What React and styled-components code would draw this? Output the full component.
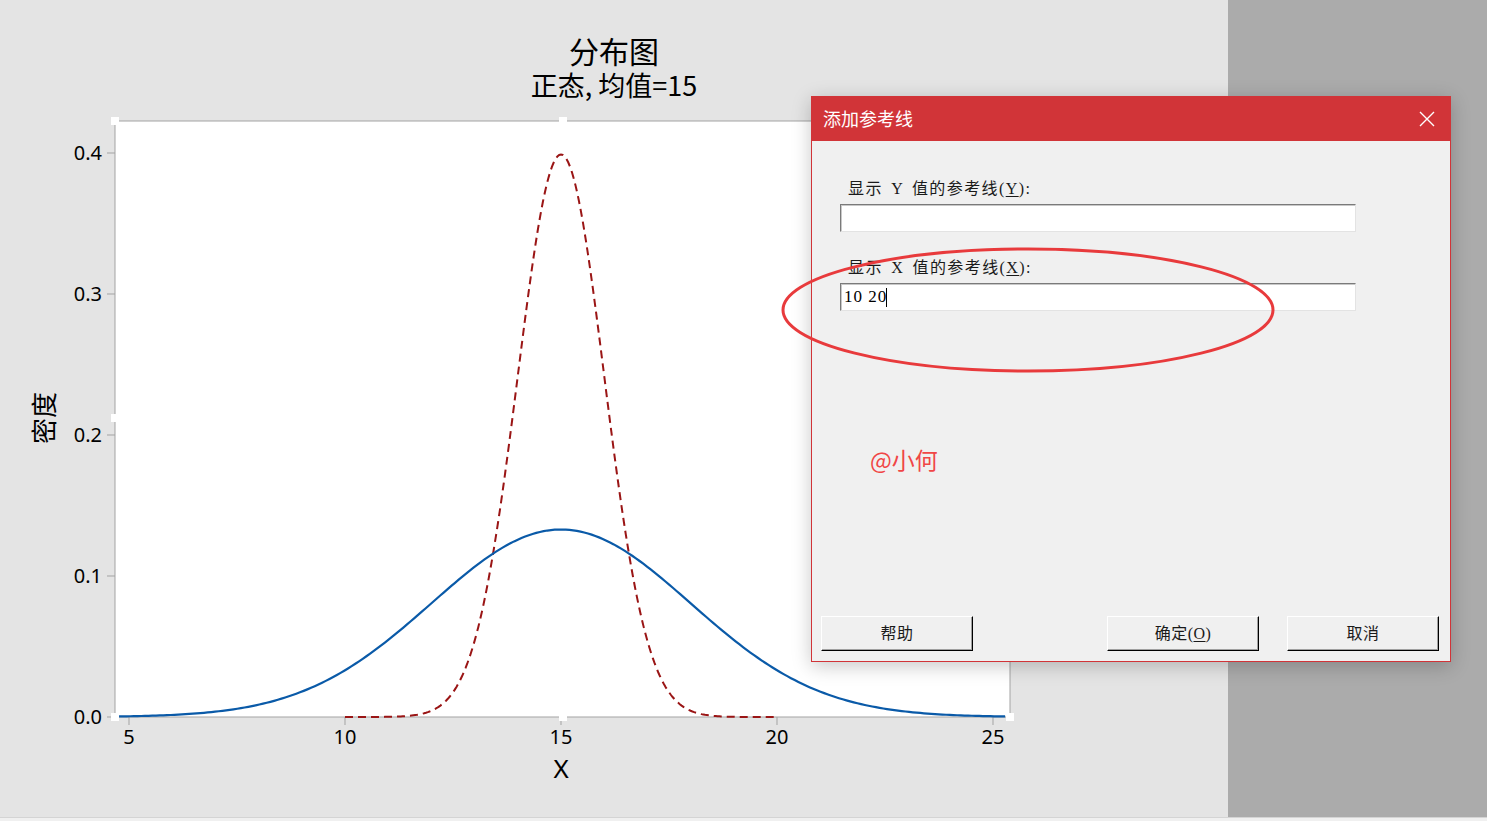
import React from "react";
import styled, { createGlobalStyle } from "styled-components";

const GlobalStyle = createGlobalStyle`
  html, body {
    margin: 0;
    padding: 0;
    overflow: hidden;
    background: #e4e4e4;
  }
  * {
    box-sizing: border-box;
  }
`;

const SANS = `"Noto Sans", "Noto Sans CJK SC", sans-serif`;
const CJK = `"Noto Sans CJK SC", "Noto Sans", sans-serif`;
const SONG = `"Liberation Serif", "Noto Sans CJK SC", serif`;

// plot mapping: x value -> px, density -> px (page coordinates)
const px = (v) => 129 + (v - 5) * 43.2;
const py = (d) => 717 - d * 1410;

function normalPath(mean, sd, from, to, steps = 240) {
  let d = "";
  for (let i = 0; i <= steps; i++) {
    const v = from + ((to - from) * i) / steps;
    const dens =
      Math.exp(-((v - mean) ** 2) / (2 * sd * sd)) / (sd * Math.sqrt(2 * Math.PI));
    d += `${i === 0 ? "M" : "L"}${px(v).toFixed(2)},${py(dens).toFixed(2)} `;
  }
  return d;
}

const yTicks = [0, 0.1, 0.2, 0.3, 0.4];
const xTicks = [5, 10, 15, 20, 25];
const handles = [
  [115, 121],
  [563, 121],
  [115, 418],
  [115, 717],
  [563, 717],
  [1010, 717],
];

const Screen = styled.div`
  position: relative;
  width: 1487px;
  height: 821px;
  display: flex;
  flex-direction: column;
  overflow: hidden;
`;

const Workspace = styled.div`
  flex: 1;
  display: flex;
`;

const GraphWindow = styled.div`
  width: 1228px;
  background: #e4e4e4;
  display: flex;
  flex-direction: column;
`;

const TitleBlock = styled.div`
  height: 100px;
  padding-top: 35px;
  display: flex;
  flex-direction: column;
  align-items: center;
  color: #000;
  font-family: ${CJK};
`;

const Title = styled.div`
  font-size: 30px;
  line-height: 31px;
`;

const Subtitle = styled.div`
  margin-top: 4px;
  font-size: 27px;
  line-height: 29px;
`;

const Chart = styled.svg`
  display: block;
  font-family: ${SANS};
`;

const SidePane = styled.div`
  flex: 1;
  background: #ababab;
`;

const StatusStrip = styled.div`
  height: 4px;
  background: #f0f0f0;
  border-top: 1px solid #d4d4d4;
`;

const Dialog = styled.div`
  position: absolute;
  left: 811px;
  top: 96px;
  width: 640px;
  height: 566px;
  border: 1px solid #d13438;
  background: #f0f0f0;
  box-shadow: 0 4px 18px rgba(0, 0, 0, 0.22);
  display: flex;
  flex-direction: column;
`;

const DialogHeader = styled.div`
  height: 44px;
  background: #d13438;
  display: flex;
  align-items: center;
  justify-content: space-between;
  padding: 0 14px 0 11px;
`;

const DialogTitle = styled.div`
  color: #fff;
  font-family: ${CJK};
  font-size: 18px;
  line-height: 22px;
  margin-top: -2px;
`;

const CloseButton = styled.button`
  width: 18px;
  height: 18px;
  padding: 0;
  border: none;
  background: none;
  display: flex;
  align-items: center;
  justify-content: center;
`;

const DialogBody = styled.div`
  position: relative;
  flex: 1;
  display: flex;
  flex-direction: column;
  padding: 38px 0 0 28px;
`;

const FieldLabel = styled.div`
  margin: ${(p) => (p.$first ? "0" : "26px")} 0 5px 8px;
  font-family: ${SONG};
  font-size: 16px;
  line-height: 20px;
  color: #1a1a1a;
  letter-spacing: 1.4px;
  word-spacing: 3px;

  u {
    text-underline-offset: 2px;
  }
`;

const TextField = styled.div`
  width: 516px;
  height: 28px;
  background: #fff;
  border: 1px solid;
  border-color: #7a7a7a #e3e3e3 #e3e3e3 #7a7a7a;
  box-shadow: inset 1px 1px 0 #c8c8c8;
  display: flex;
  align-items: center;
  padding-left: 3px;
  font-family: ${SONG};
  font-size: 17px;
  letter-spacing: 1px;
  color: #000;
`;

const Caret = styled.span`
  width: 1px;
  height: 19px;
  background: #000;
  margin-left: -1px;
`;

const Watermark = styled.div`
  position: absolute;
  left: 58px;
  top: 305px;
  font-family: ${CJK};
  font-size: 23px;
  line-height: 26px;
  color: #f04646;
`;

const ButtonRow = styled.div`
  margin-top: auto;
  display: flex;
  padding: 0 11px 10px 9px;
  margin-left: -28px;
`;

const DlgButton = styled.button`
  width: 152px;
  height: 35px;
  margin-left: ${(p) => p.$gap || 0}px;
  background: #f0f0f0;
  border: 1px solid;
  border-color: #ffffff #000000 #000000 #ffffff;
  box-shadow: inset -1px -1px 0 #a0a0a0;
  font-family: ${SONG};
  font-size: 16px;
  line-height: 20px;
  padding: 0;
  color: #1a1a1a;
  letter-spacing: 0.5px;

  u {
    text-underline-offset: 2px;
  }
`;

const Annotation = styled.svg`
  position: absolute;
  left: 778px;
  top: 245px;
  pointer-events: none;
`;

function DistributionChart() {
  return (
    <Chart width="1228" height="717" viewBox="0 100 1228 717">
      <rect x="115" y="121" width="895" height="596" fill="#fff" />
      <path
        d="M115,121 H1010 V717 H115 Z"
        fill="none"
        stroke="#a3a3a3"
        strokeWidth="1"
      />
      {yTicks.map((t) => (
        <g key={t}>
          <line x1="107" x2="115" y1={py(t)} y2={py(t)} stroke="#a3a3a3" />
          <text x="102" y={py(t) + 7} textAnchor="end" fontSize="20" fill="#000">
            {t.toFixed(1)}
          </text>
        </g>
      ))}
      {xTicks.map((t) => (
        <g key={t}>
          <line x1={px(t)} x2={px(t)} y1="717" y2="725" stroke="#a3a3a3" />
          <text x={px(t)} y="744" textAnchor="middle" fontSize="20" fill="#000">
            {t}
          </text>
        </g>
      ))}
      <text x="561" y="778" textAnchor="middle" fontSize="26" fill="#000">
        X
      </text>
      <text
        transform="translate(44,418) rotate(-90)"
        y="10"
        textAnchor="middle"
        fontSize="26"
        fontFamily={CJK}
        fill="#000"
      >
        密度
      </text>
      <path
        d={normalPath(15, 1, 10, 20)}
        fill="none"
        stroke="#9a1515"
        strokeWidth="2"
        strokeDasharray="8 5"
      />
      <path
        d={normalPath(15, 3, 4.77, 25.28)}
        fill="none"
        stroke="#0a5aa8"
        strokeWidth="2.2"
      />
      {handles.map(([x, y]) => (
        <rect key={`${x}-${y}`} x={x - 4} y={y - 4} width="8" height="8" fill="#fff" />
      ))}
    </Chart>
  );
}

export default function App() {
  return (
    <Screen>
      <GlobalStyle />
      <Workspace>
        <GraphWindow>
          <TitleBlock>
            <Title>分布图</Title>
            <Subtitle>正态, 均值=15</Subtitle>
          </TitleBlock>
          <DistributionChart />
        </GraphWindow>
        <SidePane />
      </Workspace>
      <StatusStrip />

      <Dialog>
        <DialogHeader>
          <DialogTitle>添加参考线</DialogTitle>
          <CloseButton aria-label="关闭">
            <svg width="16" height="16" viewBox="0 0 16 16">
              <path d="M1 1 L15 15 M15 1 L1 15" stroke="#fff" strokeWidth="1.4" />
            </svg>
          </CloseButton>
        </DialogHeader>
        <DialogBody>
          <FieldLabel $first>
            显示 Y 值的参考线(<u>Y</u>):
          </FieldLabel>
          <TextField />
          <FieldLabel>
            显示 X 值的参考线(<u>X</u>):
          </FieldLabel>
          <TextField>
            10 20
            <Caret />
          </TextField>
          <Watermark>@小何</Watermark>
          <ButtonRow>
            <DlgButton>帮助</DlgButton>
            <DlgButton $gap={134}>
              确定(<u>O</u>)
            </DlgButton>
            <DlgButton $gap={28}>取消</DlgButton>
          </ButtonRow>
        </DialogBody>
      </Dialog>

      <Annotation width="500" height="130" viewBox="0 0 500 130">
        <ellipse
          cx="250"
          cy="65"
          rx="245"
          ry="61"
          fill="none"
          stroke="#e83a3c"
          strokeWidth="3"
        />
      </Annotation>
    </Screen>
  );
}
